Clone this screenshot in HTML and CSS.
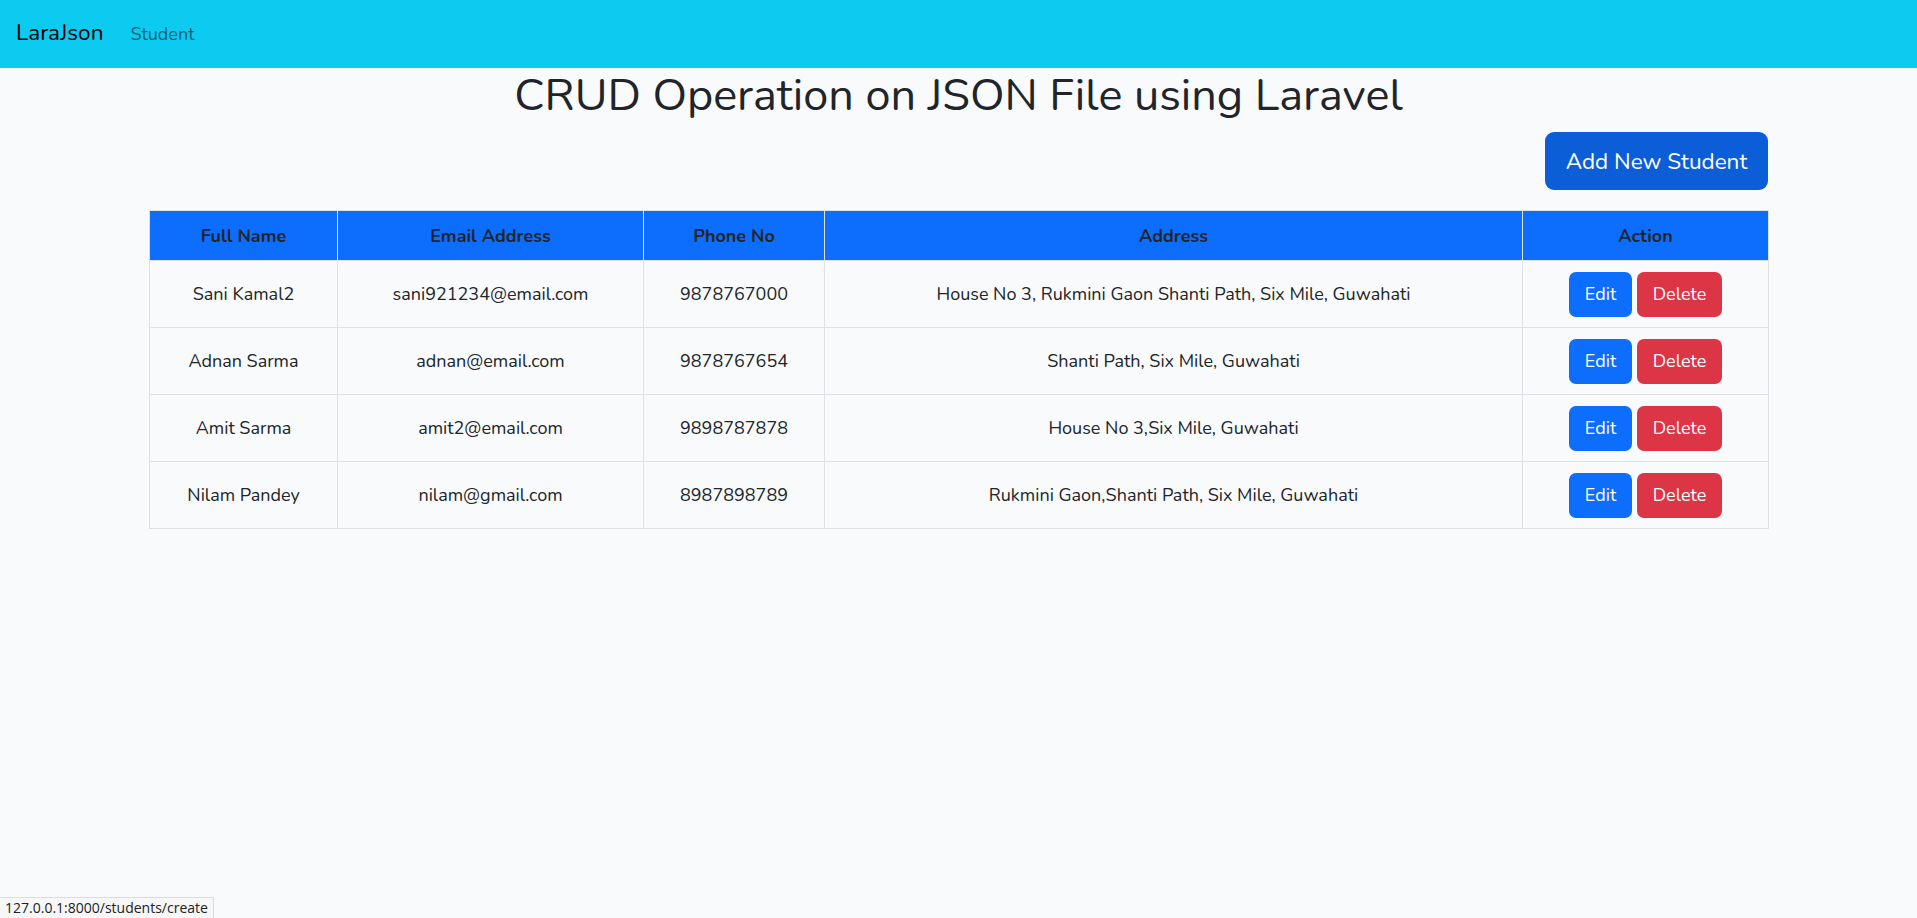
FILE: index.html
```html
<!DOCTYPE html>
<html lang="en">
<head>
<meta charset="utf-8">
<title>LaraJson</title>
<link rel="stylesheet" href="styles.css">
</head>
<body>
<nav class="navbar">
  <a class="brand" href="#">LaraJson</a>
  <a class="nav-link" href="#">Student</a>
</nav>
<main class="container">
  <h1 class="title">CRUD Operation on JSON File using Laravel</h1>
  <div class="actions-bar">
    <a class="btn-add" href="#">Add New Student</a>
  </div>
  <table class="students">
    <colgroup>
      <col class="c-name"><col class="c-email"><col class="c-phone"><col class="c-addr"><col class="c-act">
    </colgroup>
    <thead>
      <tr><th>Full Name</th><th>Email Address</th><th>Phone No</th><th>Address</th><th>Action</th></tr>
    </thead>
    <tbody>
      <tr>
        <td>Sani Kamal2</td><td>sani921234@email.com</td><td>9878767000</td>
        <td>House No 3, Rukmini Gaon Shanti Path, Six Mile, Guwahati</td>
        <td><div class="btns"><a class="btn btn-edit" href="#">Edit</a><a class="btn btn-del" href="#">Delete</a></div></td>
      </tr>
      <tr>
        <td>Adnan Sarma</td><td>adnan@email.com</td><td>9878767654</td>
        <td>Shanti Path, Six Mile, Guwahati</td>
        <td><div class="btns"><a class="btn btn-edit" href="#">Edit</a><a class="btn btn-del" href="#">Delete</a></div></td>
      </tr>
      <tr>
        <td>Amit Sarma</td><td>amit2@email.com</td><td>9898787878</td>
        <td>House No 3,Six Mile, Guwahati</td>
        <td><div class="btns"><a class="btn btn-edit" href="#">Edit</a><a class="btn btn-del" href="#">Delete</a></div></td>
      </tr>
      <tr>
        <td>Nilam Pandey</td><td>nilam@gmail.com</td><td>8987898789</td>
        <td>Rukmini Gaon,Shanti Path, Six Mile, Guwahati</td>
        <td><div class="btns"><a class="btn btn-edit" href="#">Edit</a><a class="btn btn-del" href="#">Delete</a></div></td>
      </tr>
    </tbody>
  </table>
</main>
<div class="statusbar">127.0.0.1:8000/students/create</div>
</body>
</html>
```

FILE: styles.css
```css
* { box-sizing: border-box; }
html, body { margin: 0; padding: 0; }
body {
  background: #f8fafc;
  color: #212529;
  font-family: "Nunito", Lato, "Noto Sans", sans-serif;
  font-size: 18px;
  min-height: 918px;
}
a { text-decoration: none; }

.navbar {
  height: 68px;
  background: #0dcaf0;
  display: flex;
  align-items: center;
  padding: 0 16px;
  gap: 27px;
}
.brand {
  color: #000;
  font-size: 22.5px;
  line-height: 1;
  padding-bottom: 1px;
}
.nav-link {
  color: rgba(0, 0, 0, 0.55);
  font-size: 18px;
  line-height: 1;
}

.container {
  width: 1619px;
  margin: 0 auto;
}
.title {
  margin: 0;
  padding-top: 0;
  font-size: 45px;
  font-weight: 400;
  line-height: 55px;
  text-align: center;
  color: #212529;
}
.actions-bar {
  display: flex;
  justify-content: flex-end;
  padding-top: 9px;
  margin-bottom: 20px;
}
.btn-add {
  display: flex;
  align-items: center;
  justify-content: center;
  width: 223px;
  height: 58px;
  background: #0b5ed7;
  border-radius: 9px;
  color: #fff;
  font-size: 22.5px;
}

.students {
  width: 1619px;
  border-collapse: collapse;
  table-layout: fixed;
}
.c-name { width: 188px; }
.c-email { width: 306px; }
.c-phone { width: 181px; }
.c-addr { width: 698px; }
.c-act { width: 246px; }
.students th, .students td {
  border: 1px solid #dee2e6;
  text-align: center;
  vertical-align: middle;
  padding: 0 8px;
}
.students th {
  background: #0d6efd;
  height: 50px;
  font-weight: 700;
  font-size: 18px;
  color: #212529;
}
.students td {
  height: 67px;
  font-size: 18px;
}
.btns {
  display: flex;
  justify-content: center;
  gap: 5px;
}
.btn {
  display: flex;
  align-items: center;
  justify-content: center;
  height: 45px;
  border-radius: 7px;
  color: #fff;
  font-size: 18px;
}
.btn-edit { width: 63px; background: #0d6efd; }
.btn-del { width: 85px; background: #dc3545; }

.statusbar {
  position: fixed;
  left: 0;
  bottom: 0;
  height: 21px;
  padding: 0 5px;
  background: #f7f7f7;
  border-top: 1px solid #dcdcdc;
  border-right: 1px solid #dcdcdc;
  font-family: "Open Sans", "Noto Sans", sans-serif;
  font-size: 14px;
  line-height: 20px;
  color: #222;
}
```
